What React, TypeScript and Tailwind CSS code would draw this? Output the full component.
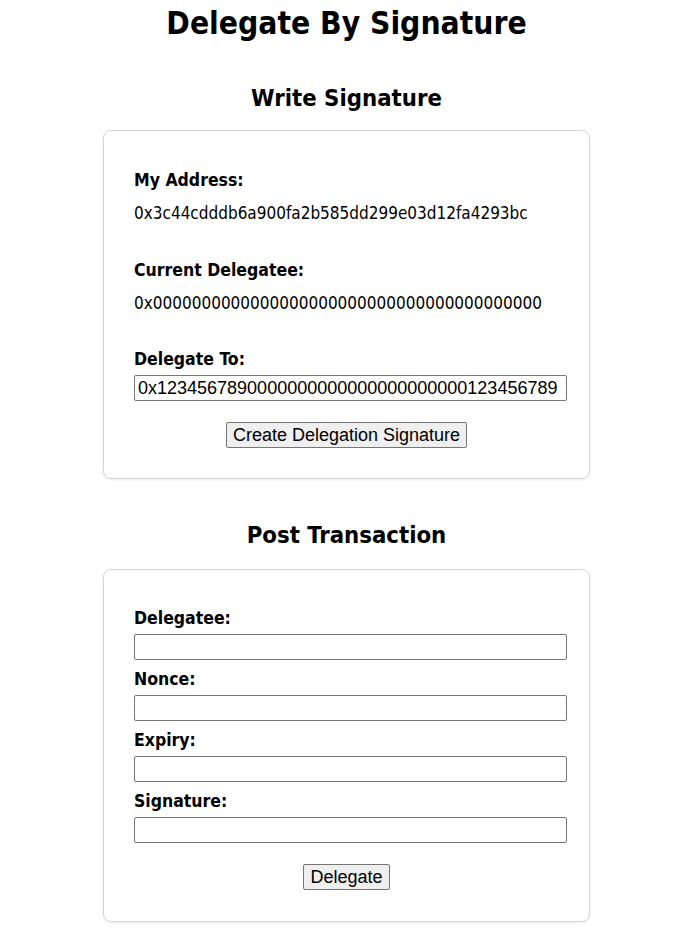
const body = "font-['DejaVu_Sans_Condensed',Tahoma,sans-serif]";

function Label({ children }: { children: string }) {
  return <div className="text-[17.5px] font-bold leading-[22px]">{children}</div>;
}

function Field({ value }: { value?: string }) {
  return (
    <input
      readOnly
      value={value ?? ""}
      className="box-border block w-[433px] h-[26px] px-[3px] py-0 border border-[#767676] rounded-[2px] bg-white text-black text-[18px] leading-[24px] font-['Liberation_Sans',Arial,sans-serif] outline-none"
    />
  );
}

function Button({ children }: { children: string }) {
  return (
    <button className="block mx-auto h-[26px] px-[6px] border border-[#767676] rounded-[2px] bg-[#efefef] text-black text-[18px] leading-[20px] font-['Liberation_Sans',Arial,sans-serif]">
      {children}
    </button>
  );
}

export default function App() {
  return (
    <div className={`${body} min-h-[947px] bg-white text-black pl-[17px]`}>
      <h1 className="pt-[3px] text-center text-[31.5px] font-bold leading-[40px]">Delegate By Signature</h1>

      <h2 className="mt-[40px] text-center text-[23.7px] font-bold leading-[30px]">Write Signature</h2>
      <div className="mx-auto mt-[17px] w-[487px] rounded-[8px] border border-[#d4d4d4] shadow-[0_1px_3px_rgba(0,0,0,0.08)] px-[30px] pt-[38px] pb-[30px]">
        <Label>My Address:</Label>
        <div className="mt-[11px] text-[17px] leading-[22px]">0x3c44cdddb6a900fa2b585dd299e03d12fa4293bc</div>
        <div className="mt-[35px]"><Label>Current Delegatee:</Label></div>
        <div className="mt-[11px] text-[17px] leading-[22px]">0x0000000000000000000000000000000000000000</div>
        <div className="mt-[34px]"><Label>Delegate To:</Label></div>
        <div className="mt-[5px]"><Field value="0x1234567890000000000000000000000123456789" /></div>
        <div className="mt-[21px]"><Button>Create Delegation Signature</Button></div>
      </div>

      <h2 className="mt-[41px] text-center text-[23.7px] font-bold leading-[30px]">Post Transaction</h2>
      <div className="mx-auto mt-[19px] w-[487px] rounded-[8px] border border-[#d4d4d4] shadow-[0_1px_3px_rgba(0,0,0,0.08)] px-[30px] pt-[37px] pb-[31px]">
        {["Delegatee:", "Nonce:", "Expiry:", "Signature:"].map((l, i) => (
          <div key={l} className={i === 0 ? "" : "mt-[8px]"}>
            <Label>{l}</Label>
            <div className="mt-[5px]"><Field /></div>
          </div>
        ))}
        <div className="mt-[21px]"><Button>Delegate</Button></div>
      </div>
    </div>
  );
}
